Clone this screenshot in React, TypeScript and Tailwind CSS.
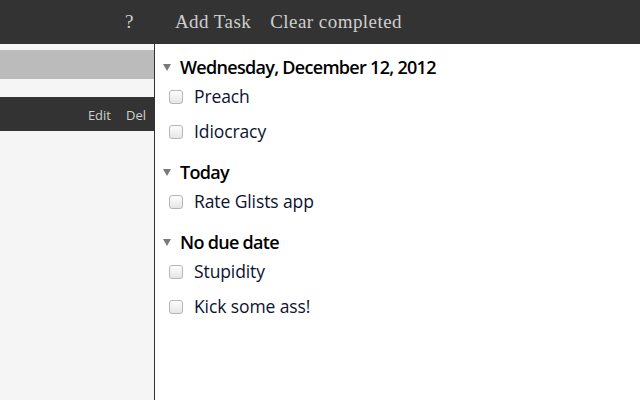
import React from "react";

const groups = [
  { title: "Wednesday, December 12, 2012", tasks: ["Preach", "Idiocracy"] },
  { title: "Today", tasks: ["Rate Glists app"] },
  { title: "No due date", tasks: ["Stupidity", "Kick some ass!"] },
];

function Tri() {
  return (
    <svg width="10" height="8" viewBox="0 0 10 8" className="shrink-0">
      <polygon points="1,1 9,1 5,8" fill="#7a7a7a" />
    </svg>
  );
}

function Box() {
  return (
    <span className="inline-block w-[14px] h-[14px] rounded-[3px] border border-[#b5b5b5] bg-gradient-to-b from-[#fdfdfd] to-[#e6e6e6] shrink-0" />
  );
}

export default function App() {
  return (
    <div className="w-[640px] h-[400px] flex flex-col bg-white overflow-hidden">
      <header className="h-[44px] bg-[#333333] flex items-center shrink-0 text-[#cfcfcf] text-[19px] tracking-[0.45px] font-['Liberation_Serif',serif]">
        <span className="ml-[125px]">?</span>
        <span className="ml-[41px]">Add Task</span>
        <span className="ml-[19px]">Clear completed</span>
      </header>
      <div className="flex flex-1 min-h-0">
        <aside className="w-[155px] shrink-0 bg-[#f5f5f5] border-r border-[#333333] flex flex-col pt-[6px]">
          <div className="h-[29px] bg-[#bbbbbb]" />
          <div className="h-[18px]" />
          <div className="h-[34px] bg-[#333333] flex items-center justify-end gap-[15px] pr-[8px] pt-[4px] text-[13px] text-[#d0d0d0] font-['Open_Sans',sans-serif]">
            <span>Edit</span>
            <span>Del</span>
          </div>
        </aside>
        <main className="flex-1 pl-[7px] pt-[11px] font-['Open_Sans',sans-serif]">
          {groups.map((g, gi) => (
            <div key={gi} className={gi > 0 ? "mt-[11px]" : ""}>
              <div className="flex items-center gap-[8px] h-[24px]">
                <Tri />
                <span className="text-[18px] font-semibold text-black tracking-[-0.7px]">{g.title}</span>
              </div>
              {g.tasks.map((t, ti) => (
                <div key={ti} className="flex items-center h-[35px] pl-[7px] gap-[11px]">
                  <Box />
                  <span className="text-[17.5px] text-[#0c1230] tracking-[-0.1px]">{t}</span>
                </div>
              ))}
            </div>
          ))}
        </main>
      </div>
    </div>
  );
}
